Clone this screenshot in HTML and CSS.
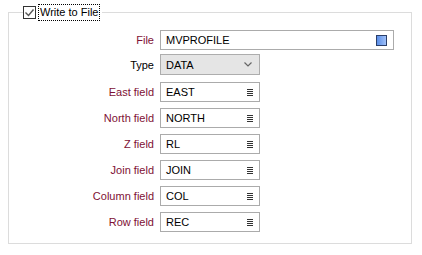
FILE: index.html
```html
<!DOCTYPE html>
<html lang="en">

<head>
  <meta charset="UTF-8" />
  <title>Write to File</title>
  <link rel="stylesheet" href="styles.css">
</head>

<body>
  <div class="group">
    <div class="legend">
      <span class="check">
        <svg width="11" height="11" viewBox="0 0 11 11"><path d="M1.5 5.5 L4.5 8.5 L9.5 2.5" fill="none" stroke="#555" stroke-width="1.4"/></svg>
      </span>
      <span class="legend-text">Write to File</span>
    </div>

    <div class="rows">
      <div class="row">
        <label class="lbl">File</label>
        <div class="box wide">
          <span>MVPROFILE</span>
          <span class="browse"></span>
        </div>
      </div>
      <div class="row row-type">
        <label class="lbl plain">Type</label>
        <div class="box combo">
          <span>DATA</span>
          <svg width="8" height="5" viewBox="0 0 8 5"><path d="M0.5 0.5 L4 4 L7.5 0.5" fill="none" stroke="#666" stroke-width="1.2"/></svg>
        </div>
      </div>
      <div class="row">
        <label class="lbl">East field</label>
        <div class="box field"><span>EAST</span><i class="list"></i></div>
      </div>
      <div class="row">
        <label class="lbl">North field</label>
        <div class="box field"><span>NORTH</span><i class="list"></i></div>
      </div>
      <div class="row">
        <label class="lbl">Z field</label>
        <div class="box field"><span>RL</span><i class="list"></i></div>
      </div>
      <div class="row">
        <label class="lbl">Join field</label>
        <div class="box field"><span>JOIN</span><i class="list"></i></div>
      </div>
      <div class="row">
        <label class="lbl">Column field</label>
        <div class="box field"><span>COL</span><i class="list"></i></div>
      </div>
      <div class="row">
        <label class="lbl">Row field</label>
        <div class="box field"><span>REC</span><i class="list"></i></div>
      </div>
    </div>
  </div>
</body>

</html>
```

FILE: styles.css
```css
* {
  box-sizing: border-box;
  margin: 0;
  padding: 0;
}

body {
  font-family: 'Liberation Sans', Arial, sans-serif;
  font-size: 11px;
  color: #000;
  background: #fff;
  width: 422px;
  height: 255px;
  overflow: hidden;
}

/* Group box */
.group {
  position: relative;
  margin: 12px 0 0 8px;
  width: 404px;
  height: 232px;
  border: 1px solid #dcdcdc;
}

.legend {
  position: absolute;
  top: -9px;
  left: 14px;
  display: flex;
  align-items: center;
  gap: 2px;
  padding-right: 2px;
  background: #fff;
}

.check {
  width: 13px;
  height: 13px;
  border: 1px solid #333;
  background: #fff;
  display: flex;
  align-items: center;
  justify-content: center;
}

.legend-text {
  border: 1px dotted #000;
  padding: 1px 1px;
  line-height: 13px;
}

/* Rows */
.rows {
  display: flex;
  flex-direction: column;
  gap: 6px;
  padding-top: 17px;
}

.row {
  display: flex;
  align-items: center;
  gap: 6px;
  height: 20px;
}

.row-type {
  height: 21px;
  margin: -2px 0 1px;
}

.lbl {
  width: 145px;
  text-align: right;
  color: #7e1034;
}

.lbl.plain {
  color: #000;
}

.box {
  height: 100%;
  border: 1px solid #ababab;
  display: flex;
  align-items: center;
  justify-content: space-between;
  padding: 0 6px 0 5px;
}

.box.wide {
  width: 234px;
}

.browse {
  width: 11px;
  height: 11px;
  border: 1px solid #2b3f6a;
  background: linear-gradient(90deg, #5a8ee8, #9fc0f8);
}

.box.combo {
  width: 100px;
  background: #e5e5e5;
  border-color: #adadad;
  padding-right: 7px;
}

.box.field {
  width: 100px;
}

.list {
  width: 6px;
  height: 7px;
  background: repeating-linear-gradient(180deg, #333 0 1px, transparent 1px 2px);
}
```
